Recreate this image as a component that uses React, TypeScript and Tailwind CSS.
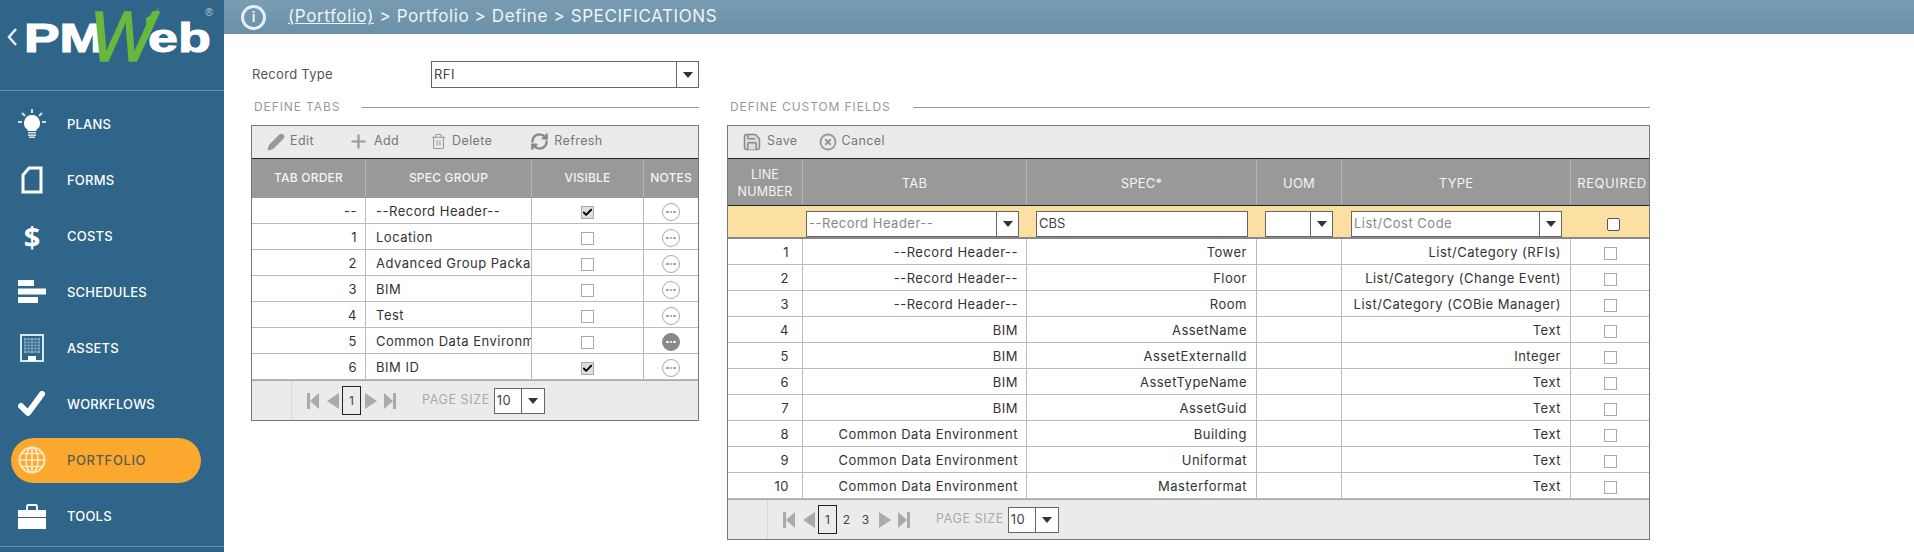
import { Check, CircleX, Pencil, Plus, RefreshCw, Save, Trash2 } from 'lucide-react';

const font = "font-['Inter',sans-serif]";

const Logo = () => (
  <svg width="224" height="90" viewBox="0 0 224 90">
    <path d="M16 29 L9 37 L16 45" fill="none" stroke="#e8eef2" strokeWidth="2.5" />
    <text x="24" y="52" fontFamily="Liberation Sans" fontWeight="700" fontSize="41" fill="#fff" stroke="#fff" strokeWidth="1.2" textLength="80" lengthAdjust="spacingAndGlyphs">PM</text>
    <text x="148" y="52" fontFamily="Liberation Sans" fontWeight="700" fontSize="41" fill="#fff" stroke="#fff" strokeWidth="1" textLength="63" lengthAdjust="spacingAndGlyphs">eb</text>
    <text x="90" y="61" fontFamily="Liberation Sans" fontWeight="400" fontStyle="italic" fontSize="70" fill="#69b83e" stroke="#69b83e" strokeWidth="1.5" textLength="64" lengthAdjust="spacingAndGlyphs">W</text>
    <path d="M146 18 Q154 14 158 8 Q157 24 147 38 Z" fill="#69b83e" />
    <text x="205" y="16" fontFamily="Liberation Sans" fontSize="11" fill="#b9cbd6">®</text>
  </svg>
);

const Bulb = () => (
  <svg width="28" height="30" viewBox="0 0 28 30" fill="#fff">
    <path d="M14 6a8 8 0 0 0-4.500 14.600V22h9v-1.400A8 8 0 0 0 14 6Z" />
    <path d="M10 23h8v1.600h-8zM10 25.400h8V27h-8zM11 27.600h6V29h-6z" opacity=".8" />
    <path d="M14 0v4M4 4l3 3M24 4l-3 3M0 13h4M24 13h4" stroke="#cfe0ea" strokeWidth="2" />
  </svg>
);

const FormIcon = () => (
  <svg width="22" height="28" viewBox="0 0 22 28" fill="none" stroke="#fff" strokeWidth="3">
    <path d="M8 2h12v24H2V9Z" strokeLinejoin="miter" />
  </svg>
);

const Bars = () => (
  <svg width="28" height="24" viewBox="0 0 28 24" fill="#fff">
    <path d="M0 0h16v6H0zM0 8.500h28v6H0zM0 17h20v6H0z" />
  </svg>
);

const Building = () => (
  <svg width="24" height="28" viewBox="0 0 24 28">
    <path d="M1 1h22v26H1z" fill="none" stroke="#dbe7ee" strokeWidth="2" />
    <path d="M4 4h16v15H4z" fill="#dbe7ee" opacity=".55" />
    <path d="M7 4v15M10 4v15M14 4v15M17 4v15M4 7h16M4 10h16M4 13h16M4 16h16" stroke="#2e6589" strokeWidth="1" />
    <path d="M8 27v-5h8v5z" fill="#fff" />
  </svg>
);

const CheckMark = () => (
  <svg width="28" height="26" viewBox="0 0 28 26" fill="none" stroke="#fff" strokeWidth="6" strokeLinecap="round" strokeLinejoin="round">
    <path d="M3 15l7 7L24 3" />
  </svg>
);

const GlobeIcon = () => (
  <svg width="28" height="28" viewBox="0 0 28 28" fill="none" stroke="#ffe9c6" strokeWidth="1.600">
    <circle cx="14" cy="14" r="12.500" strokeWidth="2" />
    <ellipse cx="14" cy="14" rx="6" ry="12.500" />
    <path d="M14 1.500v25M1.500 14h25M3.500 7.500h21M3.500 20.500h21" />
  </svg>
);

const Briefcase = () => (
  <svg width="28" height="25" viewBox="0 0 28 25" fill="#fff">
    <path d="M9 6V2.500A1.500 1.500 0 0 1 10.500 1h7A1.500 1.500 0 0 1 19 2.500V6" fill="none" stroke="#fff" strokeWidth="2" />
    <path d="M0 6h28v7H0zM0 14h28v11H0z" />
  </svg>
);

const navItems = [
  { label: 'PLANS', icon: <Bulb /> },
  { label: 'FORMS', icon: <FormIcon /> },
  { label: 'COSTS', icon: <span className="font-['Open_Sans',sans-serif] text-[29px] leading-none font-bold text-white">$</span> },
  { label: 'SCHEDULES', icon: <Bars /> },
  { label: 'ASSETS', icon: <Building /> },
  { label: 'WORKFLOWS', icon: <CheckMark /> },
  { label: 'PORTFOLIO', icon: <GlobeIcon />, active: true },
  { label: 'TOOLS', icon: <Briefcase /> },
];

const Sidebar = () => (
  <aside className="w-[224px] shrink-0 bg-[#2e6589]">
    <div className="h-[91px] border-b border-[#5f90ad]">
      <Logo />
    </div>
    <nav className="mt-[5px] pb-[2px] border-b border-[#5f90ad]">
      {navItems.map((item) => (
        <div key={item.label} className="h-[56px] flex items-center pl-[11px]">
          <div className={`w-[190px] h-[45px] flex items-center rounded-[23px] ${item.active ? 'bg-[#fba92e]' : ''}`}>
            <div className="w-[42px] flex justify-center">{item.icon}</div>
            <span className={`ml-[14px] pt-[2px] text-[13px] font-medium ${item.active ? 'tracking-[0.6px] text-[#5f5a50]' : 'tracking-[0.2px] text-white'}`}>{item.label}</span>
          </div>
        </div>
      ))}
    </nav>
  </aside>
);

const Arrow = () => (
  <svg width="10" height="6" viewBox="0 0 10 6" fill="#333">
    <path d="M0 0h10L5 6z" />
  </svg>
);

const Dropdown = ({ value, width, arrow, muted }: { value: string; width: string; arrow: string; muted?: boolean }) => (
  <div className={`${width} h-[26px] flex bg-white border border-[#666] text-[13px] tracking-[0.5px] ${muted ? 'text-[#888]' : 'text-[#444]'}`}>
    <div className="flex-1 pl-[2px] flex items-center whitespace-nowrap overflow-hidden">{value}</div>
    <div className={`${arrow} border-l border-[#666] flex items-center justify-center`}>
      <Arrow />
    </div>
  </div>
);

const Heading = ({ title }: { title: string }) => (
  <div className="h-[18px] flex items-center pl-[3px] gap-[22px]">
    <span className="text-[12px] tracking-[0.9px] text-[#999] whitespace-nowrap">{title}</span>
    <div className="flex-1 h-px bg-[#999]" />
  </div>
);

const ToolButton = ({ icon, label, className }: { icon: React.ReactNode; label: string; className: string }) => (
  <div className={`flex items-center gap-[5px] text-[12.500px] tracking-[0.4px] text-[#777] ${className}`}>
    {icon}
    {label}
  </div>
);

const Box = ({ checked }: { checked?: boolean }) => (
  <div className={`w-[13px] h-[13px] border border-[#aaa] flex items-center justify-center ${checked ? 'bg-[#ddd]' : ''}`}>
    {checked && <Check size={11} strokeWidth={4} color="#000" />}
  </div>
);

const Notes = ({ filled }: { filled?: boolean }) => (
  <div className={`w-[18px] h-[18px] rounded-full border flex items-center justify-center gap-px ${filled ? 'bg-[#888] border-[#888]' : 'border-[#aaa]'}`}>
    {[0, 1, 2].map((i) => (
      <span key={i} className={`w-[2.500px] h-[2.500px] rounded-full ${filled ? 'bg-white' : 'bg-[#999]'}`} />
    ))}
  </div>
);

const Pager = ({ pages }: { pages: string[] }) => (
  <div className="h-[40px] bg-[#ebebeb] border-t border-[#aaa] flex items-center">
    <div className="w-[40px] h-full border-r border-[#d8d8d8]" />
    <div className="flex items-center pl-[15px] text-[#aaa]">
      <svg width="12" height="16" viewBox="0 0 12 16" fill="#aaa"><path d="M0 0h3v16H0zM12 0v16L3 8z" /></svg>
      <svg className="ml-[8px]" width="12" height="16" viewBox="0 0 12 16" fill="#aaa"><path d="M12 0v16L0 8z" /></svg>
      <div className="ml-[3px] flex items-center text-[12px] text-[#444]">
        {pages.map((p, i) => (
          <div key={p} className={i === 0 ? 'w-[19px] h-[29px] border border-[#222] flex items-center justify-center' : 'w-[19px] flex items-center justify-center'}>{p}</div>
        ))}
      </div>
      <svg className="ml-[4px]" width="12" height="16" viewBox="0 0 12 16" fill="#aaa"><path d="M0 0v16l12-8z" /></svg>
      <svg className="ml-[7px]" width="12" height="16" viewBox="0 0 12 16" fill="#aaa"><path d="M9 0h3v16H9zM0 0v16l9-8z" /></svg>
      <span className="ml-[26px] text-[12.500px] tracking-[0.6px] text-[#aaa] whitespace-nowrap">PAGE SIZE</span>
      <div className="ml-[4px]">
        <Dropdown value="10" width="w-[51px]" arrow="w-[23px]" />
      </div>
    </div>
  </div>
);

const tabRows = [
  { order: '--', group: '--Record Header--', visible: true },
  { order: '1', group: 'Location' },
  { order: '2', group: 'Advanced Group Package' },
  { order: '3', group: 'BIM' },
  { order: '4', group: 'Test' },
  { order: '5', group: 'Common Data Environment', filled: true },
  { order: '6', group: 'BIM ID', visible: true },
];

const fieldRows = [
  ['1', '--Record Header--', 'Tower', 'List/Category (RFIs)'],
  ['2', '--Record Header--', 'Floor', 'List/Category (Change Event)'],
  ['3', '--Record Header--', 'Room', 'List/Category (COBie Manager)'],
  ['4', 'BIM', 'AssetName', 'Text'],
  ['5', 'BIM', 'AssetExternalId', 'Integer'],
  ['6', 'BIM', 'AssetTypeName', 'Text'],
  ['7', 'BIM', 'AssetGuid', 'Text'],
  ['8', 'Common Data Environment', 'Building', 'Text'],
  ['9', 'Common Data Environment', 'Uniformat', 'Text'],
  ['10', 'Common Data Environment', 'Masterformat', 'Text'],
];

const headCell = 'flex items-center justify-center text-center border-r border-[#b5b5b5] last:border-r-0 tracking-[0.2px] text-[#f4f4f4] whitespace-nowrap';
const bodyCell = 'flex items-center pt-[3px] border-r border-[#bbb] last:border-r-0 overflow-hidden whitespace-nowrap';

const TabsPanel = () => (
  <div className="w-[448px]">
    <Heading title="DEFINE TABS" />
    <div className="mt-[9px] border border-[#777]">
      <div className="h-[33px] bg-[#ebebeb] border-b border-[#222] flex items-center pb-px">
        <ToolButton className="ml-[15px]" icon={<Pencil size={18} color="#999" fill="#999" />} label="Edit" />
        <ToolButton className="ml-[34px]" icon={<Plus size={21} strokeWidth={2.500} color="#999" />} label="Add" />
        <ToolButton className="ml-[31px]" icon={<Trash2 size={17} strokeWidth={1.500} color="#999" />} label="Delete" />
        <ToolButton className="ml-[38px]" icon={<RefreshCw size={19} strokeWidth={3} color="#888" />} label="Refresh" />
      </div>
      <div className="h-[39px] pb-px bg-[#999] grid grid-cols-[114px_166px_112px_1fr] text-[12px] font-medium">
        <div className={headCell}>TAB ORDER</div>
        <div className={headCell}>SPEC GROUP</div>
        <div className={headCell}>VISIBLE</div>
        <div className={headCell}>NOTES</div>
      </div>
      {tabRows.map((row) => (
        <div key={row.order} className="h-[26px] grid grid-cols-[114px_166px_112px_1fr] border-b border-[#bbb] last:border-b-0 text-[13px] tracking-[0.5px] text-[#333]">
          <div className={`${bodyCell} justify-end pr-[8px]`}>{row.order}</div>
          <div className={`${bodyCell} pl-[10px]`}>{row.group}</div>
          <div className={`${bodyCell} justify-center`}><Box checked={row.visible} /></div>
          <div className={`${bodyCell} justify-center`}><Notes filled={row.filled} /></div>
        </div>
      ))}
      <Pager pages={['1']} />
    </div>
  </div>
);

const fieldCols = 'grid grid-cols-[75px_224px_230px_85px_229px_1fr]';

const FieldsPanel = () => (
  <div className="w-[923px]">
    <Heading title="DEFINE CUSTOM FIELDS" />
    <div className="mt-[9px] border border-[#777]">
      <div className="h-[33px] bg-[#ebebeb] border-b border-[#222] flex items-center pb-px">
        <ToolButton className="ml-[14px]" icon={<Save size={20} strokeWidth={1.800} color="#888" fill="#ddd" />} label="Save" />
        <ToolButton className="ml-[21px]" icon={<CircleX size={18} strokeWidth={2.500} color="#999" />} label="Cancel" />
      </div>
      <div className={`h-[46px] bg-[#999] text-[13px] font-normal ${fieldCols}`}>
        <div className={`${headCell} pt-[2px] text-[12.500px] leading-[17px]`}>LINE<br />NUMBER</div>
        <div className={`${headCell} pt-[3px]`}>TAB</div>
        <div className={`${headCell} pt-[3px]`}>SPEC*</div>
        <div className={`${headCell} pt-[3px]`}>UOM</div>
        <div className={`${headCell} pt-[3px]`}>TYPE</div>
        <div className={`${headCell} tracking-[0.6px] pl-[4px] pt-[3px]`}>REQUIRED</div>
      </div>
      <div className={`h-[34px] pt-[5px] bg-[#fbdfa3] border-t border-[#222] border-b-2 border-b-[#888] items-center ${fieldCols}`}>
        <div />
        <div className="pl-[3px]"><Dropdown value="--Record Header--" width="w-[213px]" arrow="w-[22px]" muted /></div>
        <div className="pl-[9px]">
          <div className="w-[212px] h-[26px] bg-white border border-[#666] pl-[2px] flex items-center text-[13px] text-[#444]">CBS</div>
        </div>
        <div className="pl-[8px]"><Dropdown value="" width="w-[68px]" arrow="w-[22px]" /></div>
        <div className="pl-[9px]"><Dropdown value="List/Cost Code" width="w-[211px]" arrow="w-[22px]" muted /></div>
        <div className="flex justify-center pl-[6px]">
          <div className="w-[13px] h-[13px] rounded-[2px] bg-white border border-[#555]" />
        </div>
      </div>
      {fieldRows.map((row) => (
        <div key={row[0]} className={`h-[26px] border-b border-[#bbb] last:border-b-0 text-[13px] tracking-[0.5px] text-[#333] ${fieldCols}`}>
          <div className={`${bodyCell} justify-end pr-[13px]`}>{row[0]}</div>
          <div className={`${bodyCell} justify-end pr-[8px]`}>{row[1]}</div>
          <div className={`${bodyCell} justify-end pr-[9px]`}>{row[2]}</div>
          <div className={bodyCell} />
          <div className={`${bodyCell} justify-end pr-[9px]`}>{row[3]}</div>
          <div className={`${bodyCell} justify-center`}><Box /></div>
        </div>
      ))}
      <Pager pages={['1', '2', '3']} />
    </div>
  </div>
);

export default function App() {
  return (
    <div className={`flex h-[552px] overflow-hidden bg-white ${font}`}>
      <Sidebar />
      <main className="flex-1">
        <header className="h-[34px] bg-gradient-to-b from-[#7a9db2] to-[#6890a8] flex items-center pl-[17px] text-[17px] tracking-[0.6px] text-[#f0f4f6]">
          <div className="w-[25px] h-[25px] rounded-full border-[3px] border-[#e8eef2] flex items-center justify-center text-[14px] tracking-normal font-semibold leading-none">i</div>
          <span className="ml-[22px] whitespace-nowrap"><span className="underline">(Portfolio)</span> {'>'} Portfolio {'>'} Define {'>'} SPECIFICATIONS</span>
        </header>
        <div className="pl-[27px] pt-[27px]">
          <div className="flex items-center h-[27px]">
            <span className="w-[180px] pl-px text-[13px] tracking-[0.3px] text-[#555]">Record Type</span>
            <Dropdown value="RFI" width="w-[268px] !h-[27px]" arrow="w-[22px]" />
          </div>
          <div className="mt-[10px] flex gap-[28px]">
            <TabsPanel />
            <FieldsPanel />
          </div>
        </div>
      </main>
    </div>
  );
}
